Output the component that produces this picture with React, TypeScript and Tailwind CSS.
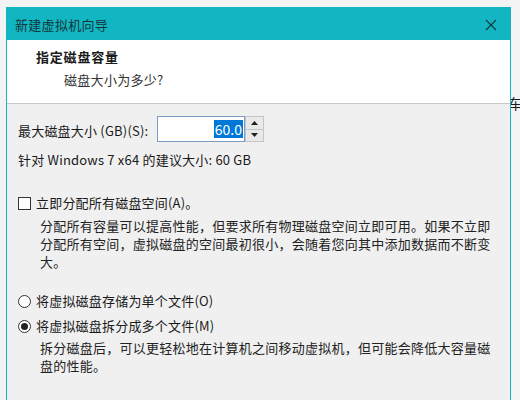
import React from 'react';

const font = { fontFamily: '"Noto Sans CJK SC", "Noto Sans", sans-serif' };

const App: React.FC = () => {
    return (
        <div className="w-[520px] h-[400px] bg-[#f0f0f0] overflow-hidden flex flex-col text-[#1a1a1a]" style={font}>
            <div className="h-[7px] shrink-0 bg-[#f3f3f3]" />
            <div className="flex flex-1 min-h-0">
                <div className="w-[6px] shrink-0 bg-[#f3f3f3]" />
                <div className="w-[505px] shrink-0 flex flex-col border-x border-[#14b4c1]">
                    {/* title bar */}
                    <div className="h-[33px] shrink-0 bg-[#12b5c2] flex items-center justify-between pl-[8px] pr-[13px]">
                        <span className="text-[13px] tracking-[0.3px] text-[#12383c] pt-[3px]">新建虚拟机向导</span>
                        <svg width="12" height="12" viewBox="0 0 12 12" className="text-[#153a40] mt-[2px]">
                            <path d="M1 1 L11 11 M11 1 L1 11" stroke="currentColor" strokeWidth="1.2" fill="none" />
                        </svg>
                    </div>

                    {/* header */}
                    <div className="h-[64px] shrink-0 bg-white border-b border-[#c9c9c9] pl-[29px] pt-[7px]">
                        <div className="text-[13px] font-bold tracking-[0.8px] leading-[20px]">指定磁盘容量</div>
                        <div className="text-[13px] tracking-[0.3px] leading-[20px] pl-[28px] mt-[3px] text-[#333]">磁盘大小为多少?</div>
                    </div>

                    {/* body */}
                    <div className="flex-1 bg-[#f0f0f0] pl-[11px] pr-[14px] pt-[12px] text-[13px] leading-[18px]">
                        <div className="flex items-center h-[26px]">
                            <span className="tracking-[0.2px] w-[139px] pt-[3px]">最大磁盘大小 (GB)(S):</span>
                            <div className="flex h-[26px]">
                                <div className="w-[88px] h-[26px] bg-white border border-[#7a9cc6] flex items-center justify-end pr-[1px]">
                                    <span className="bg-[#0078d7] text-white px-[1px] leading-[18px] text-[14px]">60.0</span>
                                </div>
                                <div className="w-[19px] h-[26px] flex flex-col border border-[#c4c4c4] bg-[#e9e9e9]">
                                    <div className="flex-1 flex items-center justify-center border-b border-[#c4c4c4]">
                                        <svg width="7" height="4" viewBox="0 0 7 4"><path d="M0 4 L3.5 0 L7 4 Z" fill="#202020" /></svg>
                                    </div>
                                    <div className="flex-1 flex items-center justify-center">
                                        <svg width="7" height="4" viewBox="0 0 7 4"><path d="M0 0 L3.5 4 L7 0 Z" fill="#202020" /></svg>
                                    </div>
                                </div>
                            </div>
                        </div>
                        <div className="mt-[9px] tracking-[0.2px]">针对 Windows 7 x64 的建议大小: 60 GB</div>

                        <div className="mt-[25px] flex items-center gap-[5px]">
                            <div className="w-[13px] h-[13px] border border-[#333] bg-white" />
                            <span className="tracking-[0.2px]">立即分配所有磁盘空间(A)。</span>
                        </div>
                        <p className="mt-[5px] ml-[22px] tracking-[0.25px] text-[#222]">
                            分配所有容量可以提高性能，但要求所有物理磁盘空间立即可用。如果不立即分配所有空间，虚拟磁盘的空间最初很小，会随着您向其中添加数据而不断变大。
                        </p>

                        <div className="mt-[21px] flex items-center gap-[5px]">
                            <div className="w-[13px] h-[13px] rounded-full border border-[#333] bg-white" />
                            <span className="tracking-[0.2px]">将虚拟磁盘存储为单个文件(O)</span>
                        </div>
                        <div className="mt-[7px] flex items-center gap-[5px]">
                            <div className="w-[13px] h-[13px] rounded-full border border-[#333] bg-white flex items-center justify-center">
                                <div className="w-[7px] h-[7px] rounded-full bg-[#222]" />
                            </div>
                            <span className="tracking-[0.2px]">将虚拟磁盘拆分成多个文件(M)</span>
                        </div>
                        <p className="mt-[4px] ml-[22px] tracking-[0.25px] text-[#222]">
                            拆分磁盘后，可以更轻松地在计算机之间移动虚拟机，但可能会降低大容量磁盘的性能。
                        </p>
                    </div>
                </div>
                <div className="flex-1 bg-[#f3f3f3] pt-[86px] overflow-hidden">
                    <span className="text-[14px] -ml-[3px] block">车</span>
                </div>
            </div>
        </div>
    );
};

export default App;
